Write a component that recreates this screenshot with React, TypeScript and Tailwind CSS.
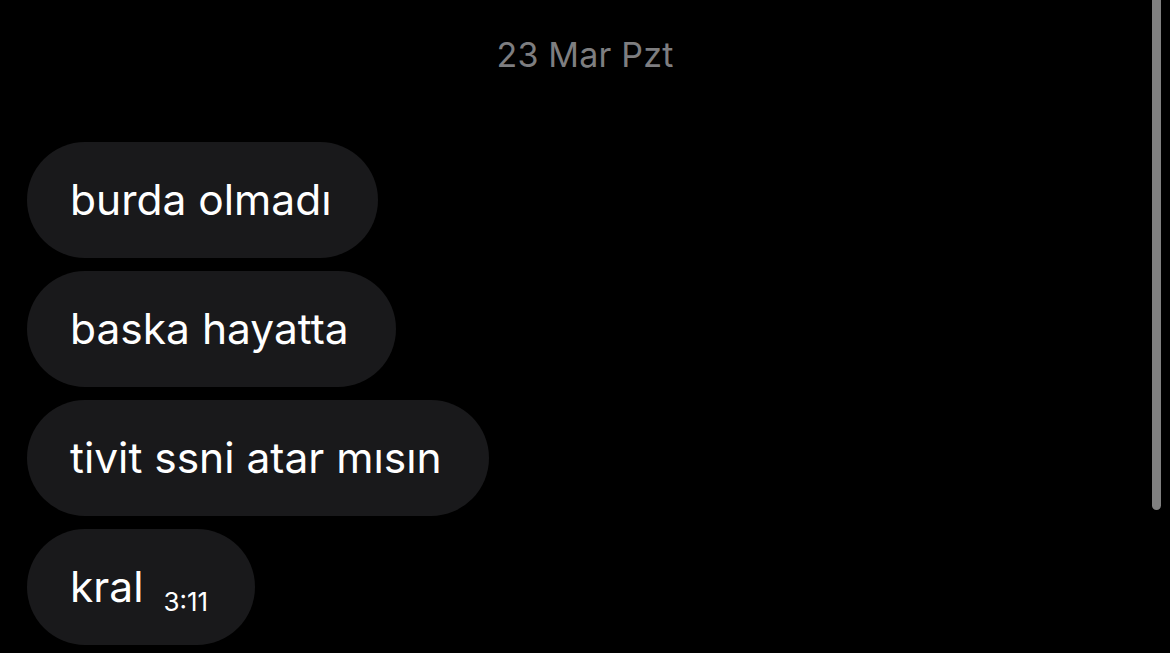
export default function App() {
  const messages = ["burda olmadı", "baska hayatta", "tivit ssni atar mısın"];

  return (
    <div
      className="relative h-[653px] w-[1170px] overflow-hidden bg-black"
      style={{ fontFamily: "Inter, 'Noto Sans', sans-serif" }}
    >
      <div className="flex flex-col px-[27px]">
        <div className="mt-[34px] mb-[66px] text-center text-[34px] leading-[42px] tracking-[0.2px] text-[#7e7e80]">
          23 Mar Pzt
        </div>
        <div className="flex flex-col items-start gap-[13px]">
          {messages.map((m) => (
            <div
              key={m}
              className="flex h-[116px] items-center rounded-full bg-[#19191b] pl-[43px] pr-[47px] text-[42.5px] text-white"
            >
              {m}
            </div>
          ))}
          <div className="flex h-[116px] items-center rounded-full bg-[#19191b] pl-[43px] pr-[47px] text-white">
            <span className="text-[42.5px]">kral</span>
            <span className="ml-[20px] mt-[28px] text-[26px]">3:11</span>
          </div>
        </div>
      </div>
      <div className="absolute right-[9px] top-0 h-[510px] w-[9px] rounded-b-full bg-[#808080]" />
    </div>
  );
}
